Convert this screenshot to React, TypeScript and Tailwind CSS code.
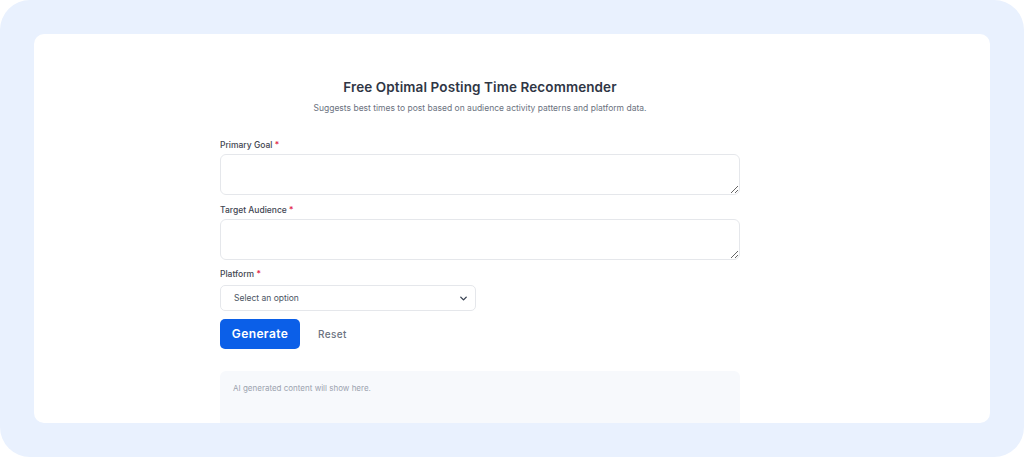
import { ChevronDown } from "lucide-react";

export default function App() {
  return (
    <div className="w-[1024px] h-[457px] bg-white" style={{ fontFamily: "Inter, 'Noto Sans', sans-serif" }}>
      <div className="h-full rounded-[30px] bg-[#e9f1fe] pt-[34px] px-[34px] overflow-hidden">
        {/* Card */}
        <div className="h-[389px] bg-white rounded-[10px] pl-[186px] pt-[44px] overflow-hidden">
          <div className="w-[520px]">
            <div className="text-center">
              <h1 className="text-[13.5px] font-semibold text-[#2f3645] leading-[18px] tracking-[0.1px]">Free Optimal Posting Time Recommender</h1>
              <p className="text-[8.5px] text-[#6b7280] mt-[6px]">Suggests best times to post based on audience activity patterns and platform data.</p>
            </div>

            {/* Primary Goal */}
            <label className="block text-[8.5px] font-medium text-[#3f4652] mt-[24px]">
              Primary Goal <span className="text-[#e11d48]">*</span>
            </label>
            <textarea className="block w-full h-[41px] mt-[2px] border border-[#e5e7eb] rounded-[6px] resize-y outline-none" />

            {/* Target Audience */}
            <label className="block text-[8.5px] font-medium text-[#3f4652] mt-[9px]">
              Target Audience <span className="text-[#e11d48]">*</span>
            </label>
            <textarea className="block w-full h-[41px] mt-[3px] border border-[#e5e7eb] rounded-[6px] resize-y outline-none" />

            {/* Platform */}
            <label className="block text-[8.5px] font-medium text-[#3f4652] mt-[8px]">
              Platform <span className="text-[#e11d48]">*</span>
            </label>
            <div className="w-[256px] h-[26px] mt-[4px] border border-[#e5e7eb] rounded-[5px] flex items-center justify-between pl-[13px] pr-[6px]">
              <span className="text-[8.5px] text-[#4b5563]">Select an option</span>
              <ChevronDown size={11} strokeWidth={3} className="text-[#374151]" />
            </div>

            {/* Buttons */}
            <div className="flex items-center mt-[8px]">
              <button className="w-[80px] h-[30px] rounded-[5px] bg-[#0b5fe8] text-white text-[12px] font-semibold tracking-[0.4px]">Generate</button>
              <button className="ml-[18px] text-[10px] font-medium text-[#6b7280] tracking-[0.4px]">Reset</button>
            </div>

            {/* Output */}
            <div className="mt-[22px] h-[80px] bg-[#f7f9fc] rounded-[6px] px-[13px] pt-[11px]">
              <p className="text-[8px] text-[#9ca3af]">AI generated content will show here.</p>
            </div>
          </div>
        </div>
      </div>
    </div>
  );
}
